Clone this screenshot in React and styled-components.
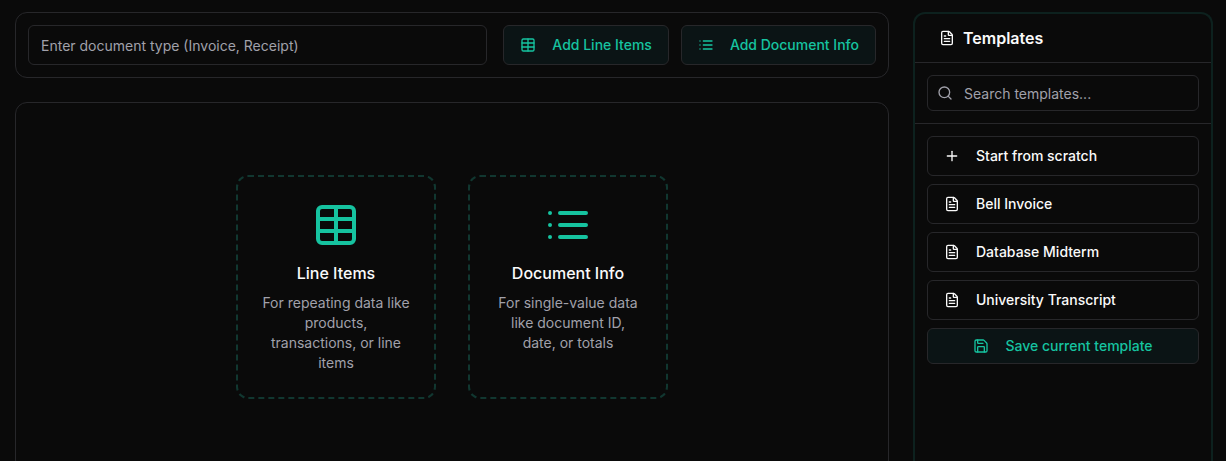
import React, { useState } from 'react';
import styled, { createGlobalStyle } from 'styled-components';
import { FileText, Plus, Save, Search, Table } from 'lucide-react';

const templates = ['Bell Invoice', 'Database Midterm', 'University Transcript'];

function ListIcon({ size = 16 }) {
    return (
        <svg width={size} height={size} viewBox="0 0 24 24" fill="none" stroke="currentColor" strokeWidth="2" strokeLinecap="round" strokeLinejoin="round" aria-hidden="true">
            <path d="M3 6h.01M3 12h.01M3 18h.01M8 6h13M8 12h13M8 18h13" />
        </svg>
    );
}

function Toolbar() {
    const [docType, setDocType] = useState('');
    return (
        <ToolbarWrapper>
            <TextInput
                type="text"
                aria-label="Document type"
                placeholder="Enter document type (Invoice, Receipt)"
                value={docType}
                onChange={e => setDocType(e.target.value)}
            />
            <ToolbarActions>
                <Button type="button" $accent><Table size={16} />Add Line Items</Button>
                <Button type="button" $accent><ListIcon />Add Document Info</Button>
            </ToolbarActions>
        </ToolbarWrapper>
    );
}

function Templates() {
    const [query, setQuery] = useState('');
    const shown = templates.filter(name => name.toLowerCase().includes(query.toLowerCase()));
    return (
        <Sidebar>
            <SidebarTitle><FileText size={16} />Templates</SidebarTitle>
            <SearchSection>
                <SearchBox>
                    <Search size={16} />
                    <SearchInput
                        type="text"
                        aria-label="Search templates"
                        placeholder="Search templates..."
                        value={query}
                        onChange={e => setQuery(e.target.value)}
                    />
                </SearchBox>
            </SearchSection>
            <TemplateList>
                <Button type="button" $align="flex-start"><Plus size={16} />Start from scratch</Button>
                {shown.map(name => (
                    <Button type="button" $align="flex-start" key={name}><FileText size={16} />{name}</Button>
                ))}
                <Button type="button" $accent $small><Save size={16} />Save current template</Button>
            </TemplateList>
        </Sidebar>
    );
}

export default function App() {
    return (
        <>
            <GlobalStyle />
            <Page>
                <Main>
                    <Toolbar />
                    <Canvas>
                        <Card type="button">
                            <Table size={48} />
                            <CardTitle>Line Items</CardTitle>
                            <CardText>For repeating data like products, transactions, or line items</CardText>
                        </Card>
                        <Card type="button">
                            <ListIcon size={48} />
                            <CardTitle>Document Info</CardTitle>
                            <CardText>For single-value data like document ID, date, or totals</CardText>
                        </Card>
                    </Canvas>
                </Main>
                <Templates />
            </Page>
        </>
    );
}

const GlobalStyle = createGlobalStyle`
:root {
    --bg: #0a0a0a;
    --text: #fafafa;
    --muted: #a1a1aa;
    --border: #27272a;
    --accent: #16c3a0;
    --accentBg: #0b1415;
}
* {
    box-sizing: border-box;
}
body {
    margin: 0;
    background: var(--bg);
    color: var(--text);
    font-family: Inter, "Liberation Sans", sans-serif;
    font-size: 14px;
    line-height: 20px;
}
button, input {
    font: inherit;
    color: inherit;
}
svg {
    flex-shrink: 0;
}
`;

const Page = styled.div`
display: flex;
gap: 24px;
height: 100vh;
padding: 12px 13px 0 15px;
overflow: hidden;
`;

const Main = styled.main`
display: flex;
flex: 1;
flex-direction: column;
gap: 24px;
min-width: 0;
`;

const ToolbarWrapper = styled.div`
display: flex;
gap: 16px;
padding: 12px;
border: 1px solid var(--border);
border-radius: 12px;
`;

const ToolbarActions = styled.div`
display: flex;
gap: 12px;
`;

const TextInput = styled.input`
flex: 1;
min-width: 0;
height: 40px;
padding: 0 12px;
border: 1px solid var(--border);
border-radius: 6px;
background: transparent;
outline: none;
&::placeholder {
    color: var(--muted);
    opacity: 1;
}
`;

const Button = styled.button`
display: flex;
align-items: center;
justify-content: ${props => props.$align || 'center'};
gap: 16px;
height: ${props => (props.$small ? '36px' : '40px')};
padding: 0 16px;
border: 1px solid var(--border);
border-radius: 6px;
background: ${props => (props.$accent ? 'var(--accentBg)' : 'transparent')};
color: ${props => (props.$accent ? 'var(--accent)' : 'var(--text)')};
font-weight: 500;
white-space: nowrap;
cursor: pointer;
`;

const Canvas = styled.section`
display: flex;
flex-shrink: 0;
align-items: stretch;
justify-content: center;
gap: 32px;
padding: 72px 24px;
border: 1px solid var(--border);
border-radius: 12px;
`;

const Card = styled.button`
display: flex;
flex-direction: column;
align-items: center;
width: 200px;
padding: 24px;
border: 2px dashed #113730;
border-radius: 12px;
background: transparent;
text-align: center;
cursor: pointer;
svg {
    color: var(--accent);
}
`;

const CardTitle = styled.span`
margin-top: 12px;
font-size: 16px;
font-weight: 500;
line-height: 24px;
`;

const CardText = styled.span`
margin-top: 8px;
color: var(--muted);
`;

const Sidebar = styled.aside`
flex: 0 0 300px;
border: 2px solid #0d211e;
border-bottom: 0;
border-radius: 12px 12px 0 0;
`;

const SidebarTitle = styled.h2`
display: flex;
align-items: center;
gap: 8px;
margin: 0;
padding: 12px 24px;
border-bottom: 1px solid var(--border);
font-size: 16px;
font-weight: 600;
line-height: 24px;
`;

const SearchSection = styled.div`
padding: 12px;
border-bottom: 1px solid var(--border);
`;

const SearchBox = styled.label`
display: flex;
align-items: center;
gap: 11px;
height: 36px;
padding: 0 9px;
border: 1px solid var(--border);
border-radius: 6px;
color: var(--muted);
`;

const SearchInput = styled.input`
flex: 1;
min-width: 0;
height: 100%;
padding: 0;
border: 0;
background: transparent;
color: var(--text);
outline: none;
&::placeholder {
    color: var(--muted);
    opacity: 1;
}
`;

const TemplateList = styled.div`
display: flex;
flex-direction: column;
gap: 8px;
padding: 12px;
`;
